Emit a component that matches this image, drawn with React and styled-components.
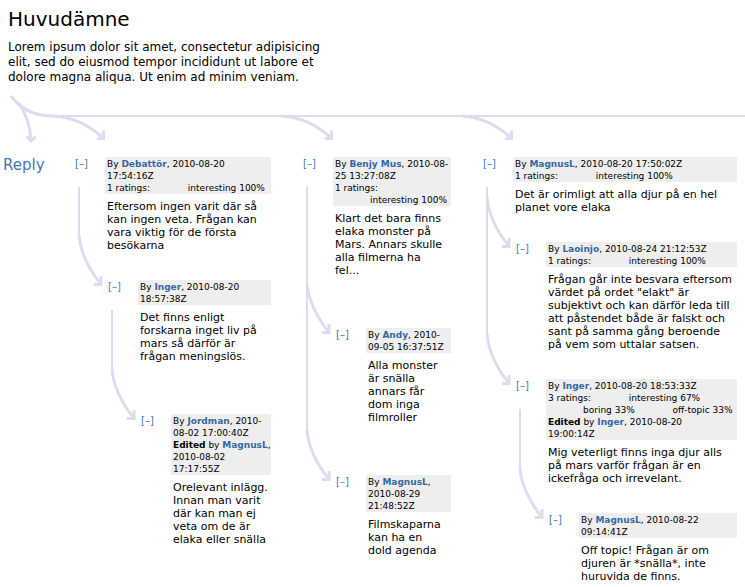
import React from "react";
import styled, { createGlobalStyle } from "styled-components";

const LINE = "#dddcee";
const LINK = "#3668a3";
const SOFT_LINK = "#4479b3";

const GlobalStyle = createGlobalStyle`
  * { box-sizing: border-box; }
  body {
    margin: 0;
    background: #fff;
    color: #000;
    font-family: "DejaVu Sans", Verdana, sans-serif;
    overflow-x: hidden;
  }
`;

const Page = styled.main`
  padding: 7px 8px 0 3px;
`;

const Topic = styled.header`
  max-width: 330px;
  padding-left: 5px;
`;

const Title = styled.h1`
  margin: 0;
  font-size: 20px;
  line-height: 24px;
  font-weight: 400;
`;

const Intro = styled.p`
  margin: 9px 0 0;
  font-size: 12px;
  line-height: 15px;
`;

const Board = styled.div`
  display: grid;
  grid-template-columns: 40px minmax(0, 196fr) minmax(0, 148fr) minmax(0, 254fr);
  column-gap: 32px;
  margin-top: 10px;
`;

const Trunk = styled.div`
  grid-column: 1 / -1;
  grid-row: 1;
  height: 2px;
  margin: 20px -8px 0 48px;
  background: ${LINE};
`;

const Drawing = styled.svg`
  display: block;
  overflow: visible;
  fill: none;
  stroke: ${LINE};
  stroke-width: 3;
`;

const Stem = styled(Drawing)`
  grid-column: 1;
  grid-row: 1;
`;

const Fork = styled(Drawing)`
  grid-column: ${(p) => p.$column};
  grid-row: 1;
  margin-left: -23px;
`;

const ReplyLink = styled.a`
  grid-row: 2;
  color: ${SOFT_LINK};
  font-size: 15px;
  line-height: 16px;
  text-decoration: none;
`;

const Thread = styled.section`
  grid-row: 2;
  min-width: 0;
`;

const Post = styled.article`
  display: grid;
  grid-template-columns: 30px minmax(0, 1fr);
`;

const Gutter = styled.div`
  display: flex;
  flex-direction: column;
  align-items: flex-start;
`;

const Toggle = styled.button`
  border: 0;
  padding: 0;
  background: none;
  color: ${SOFT_LINK};
  font: 10px/14px "DejaVu Sans", Verdana, sans-serif;
  cursor: pointer;
`;

const PostRail = styled.div`
  flex: 1;
  width: 2px;
  margin: 16px 0 44px 3px;
  background: ${LINE};
`;

const Content = styled.div`
  padding-bottom: ${(p) => (p.$roomy ? 51 : 28)}px;
`;

const Meta = styled.div`
  padding: 1px 0 0 2px;
  background: #eee;
  font-size: 9px;
  line-height: 12px;
  white-space: pre-line;
`;

const Author = styled.a`
  color: ${LINK};
  font-weight: 700;
  text-decoration: none;
`;

const Rating = styled.span`
  display: inline-block;
  margin-left: 35px;
  white-space: nowrap;
`;

const Message = styled.p`
  margin: 6px 0 0;
  padding: 0 3px 0 2px;
  font-size: 11px;
  line-height: 13px;
`;

const Replies = styled.ul`
  margin: 0;
  padding: 0;
  list-style: none;
`;

const ReplyItem = styled.li`
  display: grid;
  grid-template-columns: 33px minmax(0, 1fr);
`;

const ReplyRail = styled.div`
  grid-area: 1 / 1;
  width: 2px;
  margin: -44px 0 44px 3px;
  background: ${LINE};
`;

const Branch = styled(Drawing)`
  grid-area: 1 / 1;
  margin-top: -44px;
`;

const threads = [
  {
    author: "Debattör",
    date: "2010-08-20 17:54:16Z",
    ratings: ["interesting 100%"],
    text: "Eftersom ingen varit där så kan ingen veta. Frågan kan vara viktig för de första besökarna",
    replies: [
      {
        author: "Inger",
        date: "2010-08-20 18:57:38Z",
        roomy: true,
        text: "Det finns enligt forskarna inget liv på mars så därför är frågan meningslös.",
        replies: [
          {
            author: "Jordman",
            date: "2010-08-02 17:00:40Z",
            edited: { author: "MagnusL", date: "2010-08-02\n17:17:55Z" },
            text: "Orelevant inlägg. Innan man varit där kan man ej veta om de är elaka eller snälla",
          },
        ],
      },
    ],
  },
  {
    author: "Benjy Mus",
    date: "2010-08-25 13:27:08Z",
    ratings: ["interesting 100%"],
    roomy: true,
    text: "Klart det bara finns elaka monster på Mars. Annars skulle alla filmerna ha fel...",
    replies: [
      {
        author: "Andy",
        date: "2010-09-05 16:37:51Z",
        roomy: true,
        text: "Alla monster är snälla annars får dom inga filmroller",
      },
      {
        author: "MagnusL",
        date: "2010-08-29 21:48:52Z",
        text: "Filmskaparna kan ha en dold agenda",
      },
    ],
  },
  {
    author: "MagnusL",
    date: "2010-08-20 17:50:02Z",
    ratings: ["interesting 100%"],
    text: "Det är orimligt att alla djur på en hel planet vore elaka",
    replies: [
      {
        author: "Laoinjo",
        date: "2010-08-24 21:12:53Z",
        ratings: ["interesting 100%"],
        text: 'Frågan går inte besvara eftersom värdet på ordet "elakt" är subjektivt och kan därför leda till att påstendet både är falskt och sant på samma gång beroende på vem som uttalar satsen.',
      },
      {
        author: "Inger",
        date: "2010-08-20 18:53:33Z",
        ratings: ["interesting 67%", "boring 33%", "off-topic 33%"],
        ratingCount: 3,
        edited: { author: "Inger", date: "2010-08-20\n19:00:14Z" },
        text: "Mig veterligt finns inga djur alls på mars varför frågan är en ickefråga och irrevelant.",
        replies: [
          {
            author: "MagnusL",
            date: "2010-08-22 09:14:41Z",
            text: "Off topic! Frågan är om djuren är *snälla*, inte huruvida de finns.",
          },
        ],
      },
    ],
  },
];

function PostNode({ post }) {
  const replies = post.replies || [];
  return (
    <>
      <Post>
        <Gutter>
          <Toggle type="button" aria-expanded="true">[–]</Toggle>
          {replies.length > 0 && <PostRail />}
        </Gutter>
        <Content $roomy={post.roomy}>
          <Meta>
            <div>
              By <Author href="#">{post.author}</Author>, {post.date}
            </div>
            {post.ratings && (
              <div>
                {post.ratingCount || 1} ratings:
                {post.ratings.map((r) => (
                  <React.Fragment key={r}>
                    {" "}
                    <Rating>{r}</Rating>
                  </React.Fragment>
                ))}
              </div>
            )}
            {post.edited && (
              <div>
                <b>Edited</b> by <Author href="#">{post.edited.author}</Author>, {post.edited.date}
              </div>
            )}
          </Meta>
          <Message>{post.text}</Message>
        </Content>
      </Post>
      {replies.length > 0 && (
        <Replies>
          {replies.map((reply, i) => (
            <ReplyItem key={reply.date}>
              {i < replies.length - 1 && <ReplyRail />}
              <Branch width="33" height="52" viewBox="0 0 33 52" aria-hidden="true">
                <path d="M4 -1 C5 14 13 33 26 48" />
                <path d="M19 48.500H26V40" />
              </Branch>
              <div>
                <PostNode post={reply} />
              </div>
            </ReplyItem>
          ))}
        </Replies>
      )}
    </>
  );
}

export default function App() {
  return (
    <>
      <GlobalStyle />
      <Page>
        <Topic>
          <Title>Huvudämne</Title>
          <Intro>
            Lorem ipsum dolor sit amet, consectetur adipisicing elit, sed do eiusmod tempor
            incididunt ut labore et dolore magna aliqua. Ut enim ad minim veniam.
          </Intro>
        </Topic>
        <Board>
          <Trunk />
          <Stem width="60" height="62" viewBox="0 0 60 62" aria-hidden="true">
            <path d="M8 1 C18 14 30 21 52 21" />
            <path d="M16 8 C23 19 27 31 28 44" />
            <path d="M23.500 41 L28 46 L32.500 41.500" />
          </Stem>
          {[2, 3, 4].map((column) => (
            <Fork key={column} $column={column} width="54" height="62" viewBox="0 0 54 62" aria-hidden="true">
              <path d="M2 21 C20 22 37 30 51 43" />
              <path d="M45 43.500H51.500V35.500" />
            </Fork>
          ))}
          <ReplyLink href="#">Reply</ReplyLink>
          {threads.map((post) => (
            <Thread key={post.author}>
              <PostNode post={post} />
            </Thread>
          ))}
        </Board>
      </Page>
    </>
  );
}
